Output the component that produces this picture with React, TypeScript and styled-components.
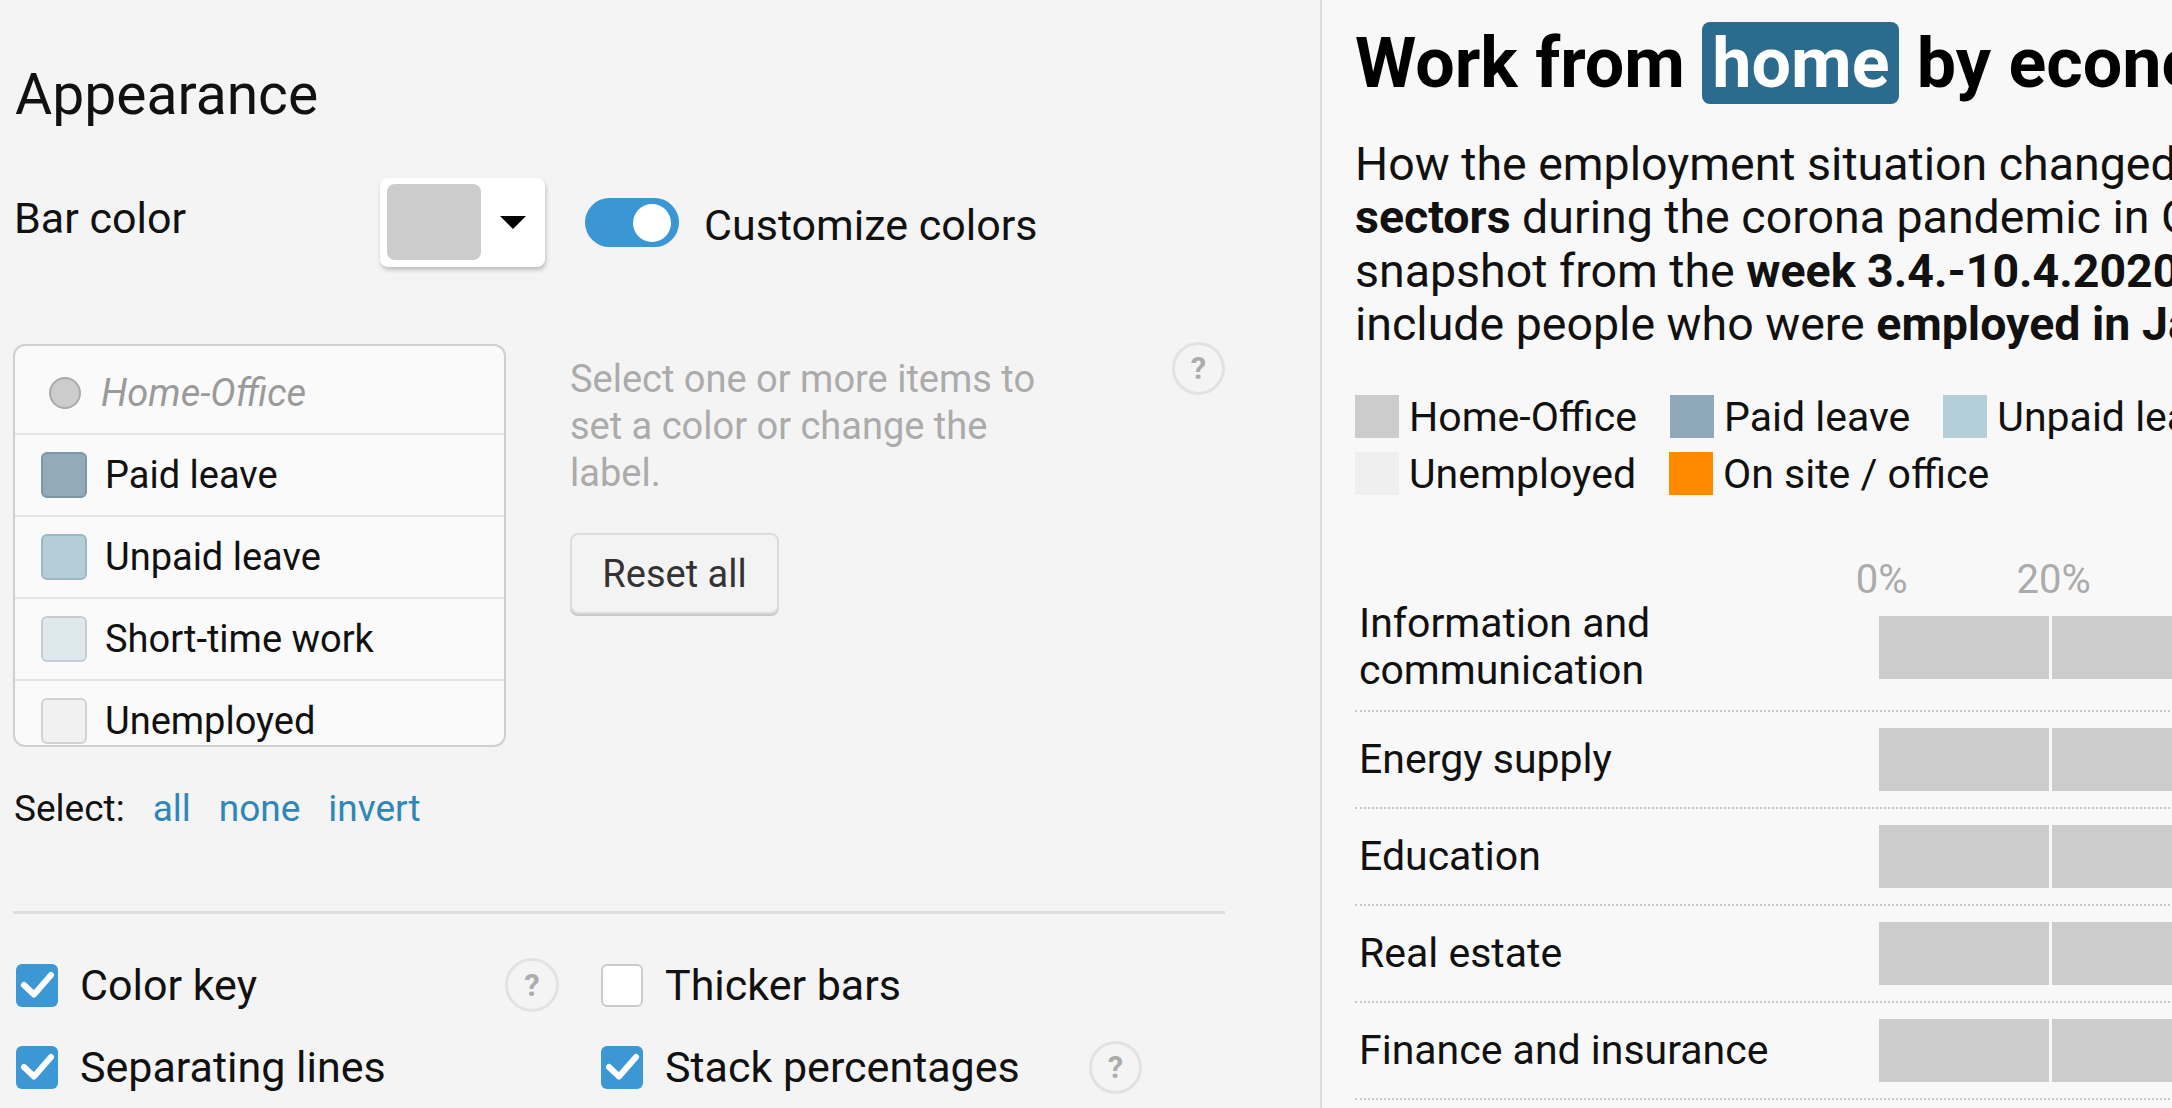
import React from "react";
import styled, { createGlobalStyle } from "styled-components";

const GlobalStyle = createGlobalStyle`
  html, body {
    margin: 0;
    padding: 0;
  }
  body {
    font-family: Roboto, "Liberation Sans", Arial, sans-serif;
    background: #f4f4f4;
    overflow: hidden;
  }
`;

interface ListItem {
  label: string;
  color: string;
  border: string;
  muted?: boolean;
}

const listItems: ListItem[] = [
  { label: "Home-Office", color: "#cccccc", border: "#aaaaaa", muted: true },
  { label: "Paid leave", color: "#93aabb", border: "#7d96a8" },
  { label: "Unpaid leave", color: "#b4cdd7", border: "#9cb8c4" },
  { label: "Short-time work", color: "#dde9ed", border: "#c6cccf" },
  { label: "Unemployed", color: "#f1f1f1", border: "#d2d2d2" },
];

const legendItems = [
  { label: "Home-Office", color: "#cccccc" },
  { label: "Paid leave", color: "#8fa8ba" },
  { label: "Unpaid leave", color: "#b5cfd8" },
  { label: "Short-time work", color: "#dce9ee" },
  { label: "Unemployed", color: "#efefef" },
  { label: "On site / office", color: "#ff8a00" },
];

const segmentColors = ["#cccccc", "#8fa8ba", "#b5cfd8", "#dce9ee", "#efefef", "#ff8a00"];

const rows = [
  { label: "Information and communication", values: [56, 4, 2, 6, 1, 31] },
  { label: "Energy supply", values: [44, 5, 2, 5, 1, 43] },
  { label: "Education", values: [47, 6, 3, 8, 1, 35] },
  { label: "Real estate", values: [41, 6, 3, 10, 2, 38] },
  { label: "Finance and insurance", values: [52, 4, 2, 4, 1, 37] },
];

const ticks = [0, 20, 40, 60, 80, 100];

/* ---------- left: settings ---------- */

const Page = styled.div`
  display: flex;
  width: 2172px;
  height: 1108px;
  overflow: hidden;
`;

const Sidebar = styled.section`
  flex: 0 0 1322px;
  box-sizing: border-box;
  padding: 0 95px 0 14px;
  background: #f4f4f4;
  border-right: 2px solid #dddddd;
  color: #111111;
`;

const Heading = styled.h2`
  margin: 61px 0 0;
  padding-left: 1px;
  font-size: 57px;
  font-weight: 400;
  line-height: 68px;
`;

const BarColorRow = styled.div`
  display: flex;
  align-items: center;
  height: 89px;
  margin-top: 49px;
`;

const FieldLabel = styled.div`
  flex: 0 0 366px;
  font-size: 43px;
  line-height: 1;
  margin-bottom: 8px;
`;

const ColorButton = styled.div`
  display: flex;
  align-items: center;
  box-sizing: border-box;
  width: 165px;
  height: 89px;
  padding: 6px 0 7px 7px;
  background: #ffffff;
  border-radius: 8px;
  box-shadow: 1px 3px 4px rgba(0, 0, 0, 0.22);
`;

const ColorSwatch = styled.div<{ $color: string }>`
  width: 94px;
  height: 76px;
  border-radius: 8px;
  background: ${(p) => p.$color};
`;

const Caret = styled.div`
  flex: 1;
  display: flex;
  justify-content: center;

  &::after {
    content: "";
    border-left: 13px solid transparent;
    border-right: 13px solid transparent;
    border-top: 13px solid #000;
  }
`;

const Toggle = styled.div`
  display: flex;
  align-items: center;
  justify-content: flex-end;
  box-sizing: border-box;
  width: 94px;
  height: 49px;
  margin-left: 40px;
  padding-right: 8px;
  border-radius: 25px;
  background: #3a97d4;
`;

const Knob = styled.div`
  width: 38px;
  height: 38px;
  border-radius: 50%;
  background: #ffffff;
`;

const ToggleLabel = styled.div`
  margin: 6px 0 0 25px;
  font-size: 43px;
  line-height: 1;
`;

const ItemsArea = styled.div`
  display: flex;
  margin-top: 77px;
`;

const ListBox = styled.div`
  flex: 0 0 493px;
  box-sizing: border-box;
  height: 403px;
  margin-left: -1px;
  padding-top: 7px;
  border: 2px solid #cfcfcf;
  border-radius: 12px;
  background: #fafafa;
  overflow: hidden;
`;

const ListRow = styled.div<{ $gap: number }>`
  display: flex;
  align-items: center;
  gap: ${(p) => p.$gap}px;
  box-sizing: border-box;
  height: 82px;
  padding-left: 26px;
  border-bottom: 2px solid #e4e4e4;
  font-size: 38px;
`;

const SwatchSlot = styled.div`
  flex: 0 0 46px;
  display: flex;
  justify-content: center;
`;

const ItemSwatch = styled.div<{ $color: string; $border: string }>`
  box-sizing: border-box;
  width: 46px;
  height: 46px;
  border-radius: 6px;
  background: ${(p) => p.$color};
  border: 2px solid ${(p) => p.$border};
`;

const ItemDot = styled.div<{ $color: string; $border: string }>`
  box-sizing: border-box;
  width: 32px;
  height: 32px;
  margin-left: 2px;
  border-radius: 50%;
  background: ${(p) => p.$color};
  border: 2px solid ${(p) => p.$border};
`;

const ItemLabel = styled.span<{ $muted?: boolean }>`
  color: ${(p) => (p.$muted ? "#9a9a9a" : "#111111")};
  font-style: ${(p) => (p.$muted ? "italic" : "normal")};
`;

const HelpColumn = styled.div`
  flex: 1;
  display: flex;
  margin-left: 64px;
`;

const HelpBody = styled.div`
  width: 480px;
`;

const HelpText = styled.p`
  margin: 12px 0 0;
  font-size: 38px;
  line-height: 47px;
  color: #ababab;
`;

const ResetButton = styled.button`
  display: block;
  width: 209px;
  height: 81px;
  margin-top: 36px;
  padding: 0;
  font-family: inherit;
  font-size: 38px;
  color: #333333;
  background: #f3f3f3;
  border: 2px solid #dcdcdc;
  border-radius: 8px;
  box-shadow: 0 2px 0 #c9c9c9;
`;

const HelpIcon = styled.div<{ $size: number }>`
  flex: 0 0 auto;
  display: flex;
  align-items: center;
  justify-content: center;
  box-sizing: border-box;
  width: ${(p) => p.$size}px;
  height: ${(p) => p.$size}px;
  margin-left: auto;
  border: 3px solid #e2e2e2;
  border-radius: 50%;
  font-size: 31px;
  font-weight: 700;
  color: #acacac;
`;

const CornerHelp = styled(HelpIcon)`
  align-self: flex-start;
  margin-top: -2px;
`;

const SelectRow = styled.div`
  display: flex;
  gap: 28px;
  margin-top: 38px;
  font-size: 37px;
  line-height: 47px;
`;

const SelectLink = styled.span`
  color: #2f87b8;
`;

const Divider = styled.hr`
  height: 3px;
  margin: 79px 0 0 -1px;
  border: 0;
  background: #dedede;
`;

const OptionsGrid = styled.div`
  display: grid;
  grid-template-columns: 545px 543px;
  grid-auto-rows: 56px;
  column-gap: 40px;
  row-gap: 26px;
  margin-top: 43px;
`;

const Option = styled.label`
  display: flex;
  align-items: center;
  gap: 22px;
  font-size: 43px;
`;

const CheckBox = styled.span<{ $checked: boolean }>`
  flex: 0 0 42px;
  display: flex;
  align-items: center;
  justify-content: center;
  box-sizing: border-box;
  height: 43px;
  margin-left: 2px;
  border-radius: 6px;
  background: ${(p) => (p.$checked ? "#3b98d5" : "#ffffff")};
  border: ${(p) => (p.$checked ? "none" : "2px solid #cccccc")};
`;

/* ---------- right: chart preview ---------- */

const ChartPanel = styled.section`
  flex: 0 0 1420px;
  box-sizing: border-box;
  padding: 22px 0 0 33px;
  background: #f8f8f8;
  color: #111111;
`;

const Title = styled.h1`
  margin: 0;
  font-size: 70px;
  font-weight: 700;
  line-height: 82px;
  white-space: nowrap;
  color: #000000;
`;

const Highlight = styled.span`
  padding: 0 10px;
  border-radius: 8px;
  background: #2b6b8d;
  color: #ffffff;
`;

const Subtitle = styled.p`
  margin: 34px 0 0;
  font-size: 46.5px;
  line-height: 53.3px;
  white-space: nowrap;
`;

const Legend = styled.div`
  display: flex;
  flex-wrap: wrap;
  column-gap: 33px;
  row-gap: 14px;
  width: 1379px;
  margin-top: 44px;
`;

const LegendItem = styled.div`
  display: flex;
  align-items: center;
  gap: 10px;
  height: 43px;
  font-size: 41px;
  white-space: nowrap;
`;

const LegendSwatch = styled.span<{ $color: string }>`
  width: 44px;
  height: 43px;
  background: ${(p) => p.$color};
`;

const AxisRow = styled.div`
  display: flex;
  height: 28px;
  margin-top: 61px;
`;

const AxisSpacer = styled.div`
  flex: 0 0 524px;
`;

const AxisTrack = styled.div`
  position: relative;
  flex: 0 0 855px;
`;

const Tick = styled.span`
  position: absolute;
  top: 0;
  transform: translateX(-45%);
  font-size: 40px;
  line-height: 47px;
  color: #ababab;
`;

const ChartRow = styled.div`
  display: flex;
  align-items: center;
  width: 1379px;
  padding: 16px 0;
  border-bottom: 2px dotted #c9c9c9;
`;

const RowLabel = styled.div`
  flex: 0 0 524px;
  box-sizing: border-box;
  padding: 0 24px 0 4px;
  font-size: 41px;
  line-height: 47px;
`;

const BarTrack = styled.div`
  position: relative;
  display: flex;
  flex: 0 0 855px;
  height: 63px;
`;

const Segment = styled.div<{ $color: string }>`
  height: 100%;
  background: ${(p) => p.$color};
`;

const GridLine = styled.div`
  position: absolute;
  top: 0;
  bottom: 0;
  width: 3px;
  margin-left: -1px;
  background: rgba(255, 255, 255, 0.85);
`;

const Check = () => (
  <svg width="42" height="43" viewBox="0 0 42 43">
    <path
      d="M8 21 L18 30.5 L35 11"
      fill="none"
      stroke="#ffffff"
      strokeWidth="6"
      strokeLinecap="round"
      strokeLinejoin="round"
    />
  </svg>
);

const App = () => (
  <Page>
    <GlobalStyle />
    <Sidebar>
      <Heading>Appearance</Heading>

      <BarColorRow>
        <FieldLabel>Bar color</FieldLabel>
        <ColorButton>
          <ColorSwatch $color="#cccccc" />
          <Caret />
        </ColorButton>
        <Toggle>
          <Knob />
        </Toggle>
        <ToggleLabel>Customize colors</ToggleLabel>
      </BarColorRow>

      <ItemsArea>
        <ListBox>
          {listItems.map((item) => (
            <ListRow key={item.label} $gap={item.muted ? 14 : 18}>
              <SwatchSlot>
                {item.muted ? (
                  <ItemDot $color={item.color} $border={item.border} />
                ) : (
                  <ItemSwatch $color={item.color} $border={item.border} />
                )}
              </SwatchSlot>
              <ItemLabel $muted={item.muted}>{item.label}</ItemLabel>
            </ListRow>
          ))}
        </ListBox>
        <HelpColumn>
          <HelpBody>
            <HelpText>
              Select one or more items to set a color or change the label.
            </HelpText>
            <ResetButton>Reset all</ResetButton>
          </HelpBody>
          <CornerHelp $size={53}>?</CornerHelp>
        </HelpColumn>
      </ItemsArea>

      <SelectRow>
        <span>Select:</span>
        <SelectLink>all</SelectLink>
        <SelectLink>none</SelectLink>
        <SelectLink>invert</SelectLink>
      </SelectRow>

      <Divider />

      <OptionsGrid>
        <Option>
          <CheckBox $checked>
            <Check />
          </CheckBox>
          Color key
          <HelpIcon $size={54}>?</HelpIcon>
        </Option>
        <Option>
          <CheckBox $checked={false} />
          Thicker bars
        </Option>
        <Option>
          <CheckBox $checked>
            <Check />
          </CheckBox>
          Separating lines
        </Option>
        <Option>
          <CheckBox $checked>
            <Check />
          </CheckBox>
          Stack percentages
          <HelpIcon $size={53}>?</HelpIcon>
        </Option>
      </OptionsGrid>
    </Sidebar>

    <ChartPanel>
      <Title>
        Work from <Highlight>home</Highlight> by economic sector
      </Title>
      <Subtitle>
        How the employment situation changed in different economic
        <br />
        <b>sectors</b> during the corona pandemic in Germany – a
        <br />
        snapshot from the <b>week 3.4.-10.4.2020</b>. The figures
        <br />
        include people who were <b>employed in January 2020</b>.
      </Subtitle>

      <Legend>
        {legendItems.map((item) => (
          <LegendItem key={item.label}>
            <LegendSwatch $color={item.color} />
            {item.label}
          </LegendItem>
        ))}
      </Legend>

      <AxisRow>
        <AxisSpacer />
        <AxisTrack>
          {ticks.map((t) => (
            <Tick key={t} style={{ left: `${t}%` }}>
              {t}%
            </Tick>
          ))}
        </AxisTrack>
      </AxisRow>

      {rows.map((row) => (
        <ChartRow key={row.label}>
          <RowLabel>{row.label}</RowLabel>
          <BarTrack>
            {row.values.map((v, i) => (
              <Segment key={i} $color={segmentColors[i]} style={{ width: `${v}%` }} />
            ))}
            {ticks.slice(1, -1).map((t) => (
              <GridLine key={t} style={{ left: `${t}%` }} />
            ))}
          </BarTrack>
        </ChartRow>
      ))}
    </ChartPanel>
  </Page>
);

export default App;
